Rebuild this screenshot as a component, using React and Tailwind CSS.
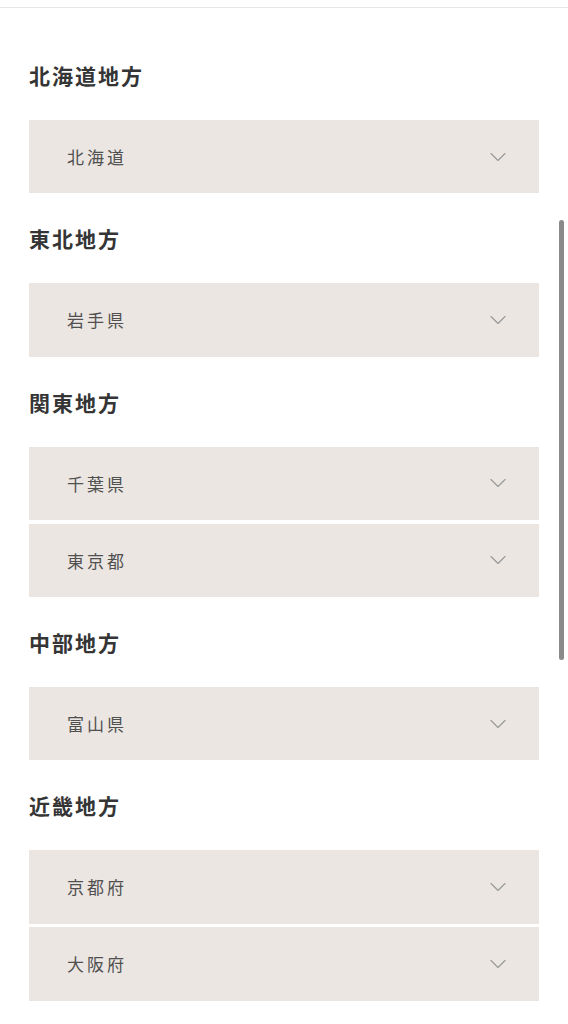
import React from 'react';
import { ChevronDown } from 'lucide-react';

const regions = [
  { name: '北海道地方', prefs: ['北海道'] },
  { name: '東北地方', prefs: ['岩手県'] },
  { name: '関東地方', prefs: ['千葉県', '東京都'] },
  { name: '中部地方', prefs: ['富山県'] },
  { name: '近畿地方', prefs: ['京都府', '大阪府'] },
];

const App = () => {
  return (
    <div
      className="relative min-h-[1024px] bg-white text-[#333]"
      style={{ fontFamily: '"Noto Sans CJK JP", "Noto Sans", sans-serif' }}
    >
      <div className="h-[8px] border-b border-[#e6e6e6]" />

      {/* Region list */}
      <div className="flex flex-col gap-[35px] px-[29px] pt-[57px]">
        {regions.map((region) => (
          <section key={region.name}>
            <h2 className="text-[21px] font-bold leading-[20px] tracking-[2px] text-[#353535]">
              {region.name}
            </h2>
            <div className="mt-[35px] flex flex-col gap-[3.5px]">
              {region.prefs.map((pref) => (
                <button
                  key={pref}
                  className="flex h-[73.4px] w-full items-center justify-between bg-[#ebe6e2] pl-[38px] pr-[27px] text-left"
                >
                  <span className="text-[17px] tracking-[3px] text-[#505050]">{pref}</span>
                  <ChevronDown size={28} strokeWidth={1} className="text-[#9a9a9a]" />
                </button>
              ))}
            </div>
          </section>
        ))}
      </div>

      {/* overlay scrollbar */}
      <div className="absolute left-[559px] top-[220px] h-[440px] w-[5px] rounded-full bg-[#8a8a8a]" />
    </div>
  );
};

export default App;
